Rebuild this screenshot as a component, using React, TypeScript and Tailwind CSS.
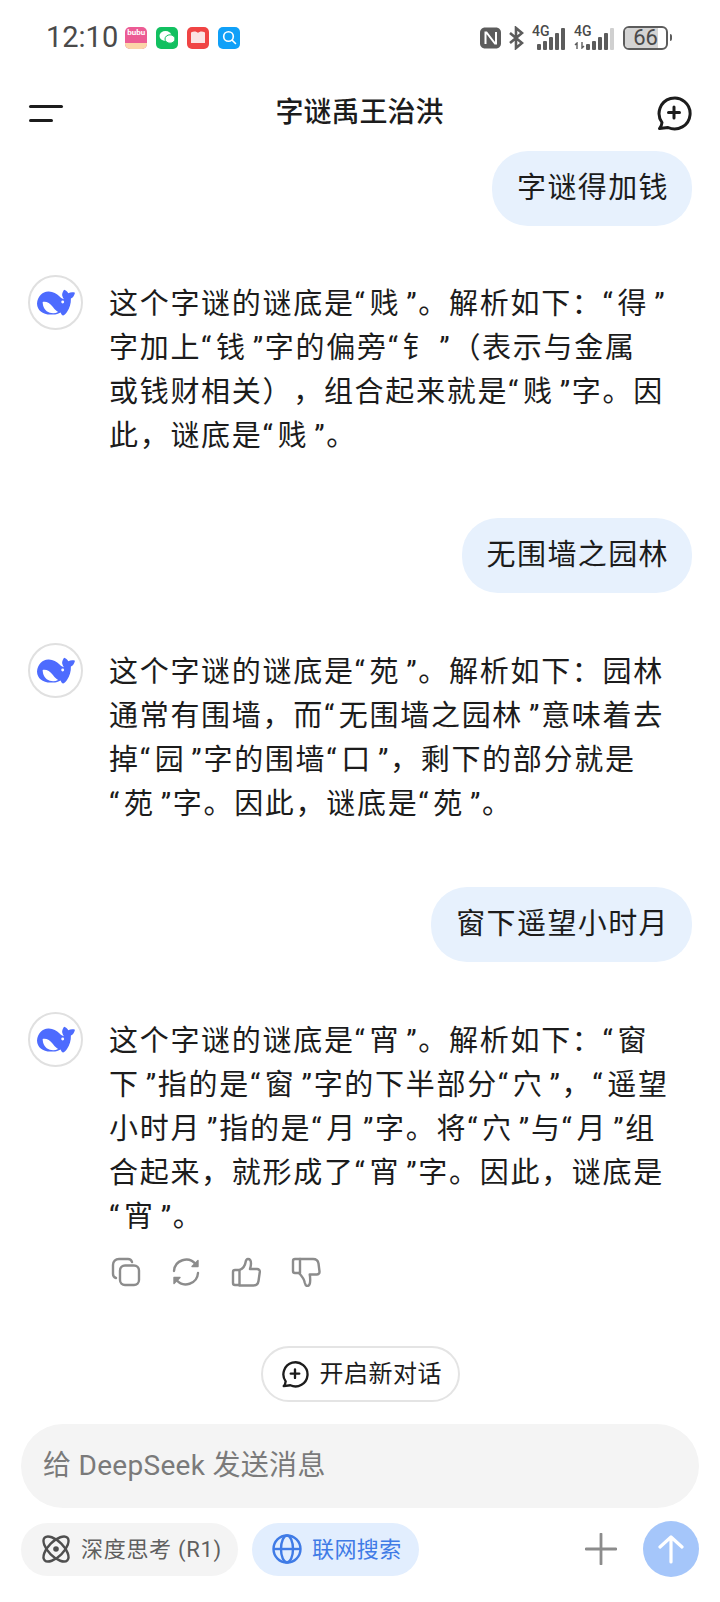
import React from 'react'

const FONT = "font-['Roboto','Noto_Sans_CJK_SC',sans-serif]"

const Whale: React.FC = () => (
  <svg width="38" height="27" viewBox="0 0 37 26">
    <path d="M0 14C.5 7 5 2.500 11 2.200c4.500-.2 8 2 11 5 1.300 1.300 2.600 2.200 4.200 2.600-1.300-2-1.900-3.500-1.700-5 .2-1.500.8-3 1.800-4.300 1.800.6 3.200 1.700 4.200 3.500 1.800-.9 3.800-1.100 6.500-.6-.7 2.800-2 4.700-4 5.800.2 5-1.300 9.500-3.800 13-1.200 1.700-2.400 2.900-3.700 3.500-1.200-.4-2.100-1.500-2.500-3-2 1.200-4.500 2-7.500 2C6 25.500.2 21 0 14z" fill="#4d6bfe" />
    <path d="M5.500 12.500c3.500-.8 7 1 10 5 1.800 2.400 3.300 3.900 5 4.800-2.500 1.300-5.200 1.500-8 .7C8 21.500 5.600 17.500 5.500 12.500z" fill="#fff" />
    <circle cx="25" cy="12.500" r="1.400" fill="#fff" />
  </svg>
)

const Avatar: React.FC = () => (
  <div className="w-[55px] h-[55px] rounded-full border-2 border-[#e0e0e0] flex items-center justify-center flex-shrink-0">
    <Whale />
  </div>
)

// quotes are set a little off the character, as in the original font
const Line: React.FC<{ text: string }> = ({ text }) => (
  <div className="whitespace-nowrap">
    {text.split(/([“”])/).map((part, i) => {
      if (part === '“') return <span key={i} className="mr-[3px]">“</span>
      if (part === '”') return <span key={i} className="ml-[6px]">”</span>
      return <React.Fragment key={i}>{part}</React.Fragment>
    })}
  </div>
)

const AiMessage: React.FC<{ lines: string[]; children?: React.ReactNode }> = ({ lines, children }) => (
  <div className="flex pl-[28px] gap-[26px]">
    <Avatar />
    <div className="pt-[7px]">
      <div className="text-[29px] leading-[44px] text-[#1c1c1c] tracking-[1.7px] [text-spacing-trim:space-all]">
        {lines.map((l) => <Line key={l} text={l} />)}
      </div>
      {children}
    </div>
  </div>
)

const UserBubble: React.FC<{ text: string }> = ({ text }) => (
  <div className="flex justify-end pr-[28px]">
    <div className="h-[75px] pl-[25px] pr-[23px] flex items-center rounded-[36px] bg-[#e7f1fd] text-[29px] tracking-[1.4px] text-[#1c1c1c]">
      {text}
    </div>
  </div>
)

const NewChatIcon: React.FC<{ size: number; sw: number; color?: string }> = ({ size, sw, color = '#1c1c1c' }) => (
  <svg width={size} height={size} viewBox="0 0 36 36" fill="none" stroke={color} strokeWidth={sw} strokeLinecap="round" strokeLinejoin="round">
    <path d="M6 27.500A15.500 15.500 0 1 1 12 32.500L3.500 33.500C5 32 5.800 30 6 27.500z" />
    <path d="M18 12v11M12.500 17.500h11" />
  </svg>
)

const ActionIcons: React.FC = () => (
  <div className="flex items-center gap-[30px] mt-[18px] ml-[2px]">
    <svg width="30" height="30" viewBox="0 0 30 30" fill="none" stroke="#8c8c8c" strokeWidth="2.400" strokeLinecap="round" strokeLinejoin="round">
      <rect x="9" y="8.500" width="19" height="19.500" rx="5" />
      <path d="M21 5c-.5-1.800-2-3-4-3H8C4.500 2 2 4.500 2 8v9c0 2 1.200 3.500 3 4" />
    </svg>
    <svg width="30" height="30" viewBox="0 0 30 30" fill="none" stroke="#8c8c8c" strokeWidth="2.400" strokeLinecap="round" strokeLinejoin="round">
      <path d="M3 14A12.200 12.200 0 0 1 24.500 7" />
      <path d="M27 16A12.200 12.200 0 0 1 5.500 23" />
      <path d="M27 3.500v6h-6z" fill="#8c8c8c" strokeWidth="1.400" />
      <path d="M3 26.500v-6h6z" fill="#8c8c8c" strokeWidth="1.400" />
    </svg>
    <svg width="30" height="30" viewBox="0 0 30 30" fill="none" stroke="#8c8c8c" strokeWidth="2.400" strokeLinecap="round" strokeLinejoin="round">
      <path d="M8.500 13v15H4c-1.200 0-2-.8-2-2V15c0-1.200.8-2 2-2z" />
      <path d="M8.500 13c3.500-1.500 5.500-4 6-7.500.3-2 1-3.500 2.500-3.500 2 0 3 2 3 4.500 0 2-.5 4-1 5.500h7c1.800 0 3 1.300 2.800 3l-1.300 9c-.5 3-2.500 4.500-5 4.500H8.500" />
    </svg>
    <svg width="30" height="30" viewBox="0 0 30 30" fill="none" stroke="#8c8c8c" strokeWidth="2.400" strokeLinecap="round" strokeLinejoin="round">
      <path d="M9 2v14H4c-1.200 0-2-.8-2-2V4c0-1.200.8-2 2-2z" />
      <path d="M9 2h13c3 0 5 1.500 5.500 4.500l1 8c.2 1.700-1 3-2.800 3h-7c.5 1.500.5 3.500.5 5.500 0 3.500-1 6-3 6-1.500 0-2-1.500-2.500-3.500-.5-3.500-2.500-6-5.700-9.500" />
    </svg>
  </div>
)

const BAR_HEIGHTS = [6, 9, 13, 17, 22]

const Signal: React.FC<{ lastColor: string }> = ({ lastColor }) => (
  <div className="flex items-end gap-[2px]">
    {BAR_HEIGHTS.map((h, i) => (
      <div key={i} className="w-[4px] rounded-[1px]" style={{ height: h, background: i === 4 ? lastColor : '#5c5c5c' }} />
    ))}
  </div>
)

const StatusBar: React.FC = () => (
  <div className="h-[75px] flex items-center pl-[46px] pr-[48px] text-[#4a4a4a]">
    <span className="text-[29px] leading-none font-['Roboto',sans-serif] mr-[7px]">12:10</span>
    <div className="flex items-center gap-[9px]">
      <div className="w-[22px] h-[22px] rounded-[5px] bg-[#ec5b94] overflow-hidden flex flex-col items-center">
        <span className="text-[8px] leading-[12px] text-white font-bold font-['Roboto',sans-serif]">bubu</span>
        <div className="mt-auto w-full h-[6px] bg-[#fbd5a8]" />
      </div>
      <div className="w-[22px] h-[22px] rounded-[5px] bg-[#12c060] flex items-center justify-center">
        <svg width="17" height="15" viewBox="0 0 17 15">
          <ellipse cx="6.500" cy="6" rx="6" ry="5" fill="#fff" />
          <ellipse cx="11" cy="9" rx="5" ry="4.200" fill="#fff" stroke="#12c060" />
        </svg>
      </div>
      <div className="w-[22px] h-[22px] rounded-[5px] bg-[#f04444] flex items-center justify-center">
        <svg width="14" height="13" viewBox="0 0 14 13">
          <path d="M0 1.500C3 0 5.500.5 7 2c1.500-1.500 4-2 7-.5V12H0z" fill="#fbe4e4" />
        </svg>
      </div>
      <div className="w-[22px] h-[22px] rounded-[5px] bg-[#10a0f8] flex items-center justify-center">
        <svg width="15" height="15" viewBox="0 0 15 15" fill="none" stroke="#fff" strokeWidth="1.600" strokeLinecap="round">
          <circle cx="6.500" cy="6.500" r="4.800" />
          <path d="M10.200 10.200L13.500 13.500" />
        </svg>
      </div>
    </div>
    <div className="ml-auto flex items-center">
      <svg width="21" height="22" viewBox="0 0 21 22" className="mr-[7px]">
        <path d="M5 0.500h11c2.800 0 5 2.200 5 5v11c0 2.800-2.200 5-5 5H5c-2.800 0-5-2.200-5-5v-11c0-2.800 2.200-5 5-5z" fill="#5c5c5c" />
        <path d="M5.500 17V5.500h1L15 16.500h1V5" fill="none" stroke="#fff" strokeWidth="2" />
      </svg>
      <svg width="16" height="24" viewBox="0 0 16 24" fill="none" stroke="#5c5c5c" strokeWidth="2.600" className="mr-[8px]">
        <path d="M2 7l12 10-6 5V2l6 5L2 17" />
      </svg>
      <div className="relative w-[33px] h-[24px] mr-[9px]">
        <span className="absolute -top-[2px] left-0 text-[14px] leading-[14px] font-medium font-['Roboto',sans-serif]">4G</span>
        <div className="absolute bottom-0 right-0"><Signal lastColor="#5c5c5c" /></div>
      </div>
      <div className="relative w-[40px] h-[24px] mr-[9px]">
        <span className="absolute -top-[2px] left-0 text-[14px] leading-[14px] font-medium font-['Roboto',sans-serif]">4G</span>
        <svg width="11" height="7" viewBox="0 0 11 7" fill="none" stroke="#5c5c5c" strokeWidth="1.400" className="absolute bottom-[1px] left-0">
          <path d="M3 7V1L1 3M8 0v6l2-2" />
        </svg>
        <div className="absolute bottom-0 right-0"><Signal lastColor="#d0d0d0" /></div>
      </div>
      <div className="w-[45px] h-[24px] rounded-[6px] border-2 border-[#5c5c5c] flex items-center overflow-hidden relative">
        <div className="absolute inset-y-0 left-0 w-[33px] bg-[#d4d4d4]" />
        <span className="relative w-full text-center text-[22px] leading-none font-['Roboto',sans-serif]">66</span>
      </div>
      <div className="w-[2px] h-[7px] bg-[#5c5c5c] ml-[2px] rounded-r" />
    </div>
  </div>
)

const Header: React.FC = () => (
  <div className="h-[76px] flex items-center justify-between pl-[29px] pr-[28px]">
    <div className="flex flex-col gap-[11px] w-[34px]">
      <div className="h-[3px] w-[34px] bg-[#1c1c1c] rounded-full" />
      <div className="h-[3px] w-[24px] bg-[#1c1c1c] rounded-full" />
    </div>
    <div className="text-[28px] font-medium text-[#1c1c1c]">字谜禹王治洪</div>
    <NewChatIcon size={36} sw={3} />
  </div>
)

const App: React.FC = () => (
  <div className={`w-[720px] h-[1602px] bg-white flex flex-col ${FONT}`}>
    <StatusBar />
    <Header />
    <div className="flex flex-col">
      <UserBubble text="字谜得加钱" />
      <div className="mt-[49px]">
        <AiMessage lines={['这个字谜的谜底是“贱”。解析如下：“得”', '字加上“钱”字的偏旁“钅”（表示与金属', '或钱财相关），组合起来就是“贱”字。因', '此，谜底是“贱”。']} />
      </div>
      <div className="mt-[60px]"><UserBubble text="无围墙之园林" /></div>
      <div className="mt-[50px]">
        <AiMessage lines={['这个字谜的谜底是“苑”。解析如下：园林', '通常有围墙，而“无围墙之园林”意味着去', '掉“园”字的围墙“口”，剩下的部分就是', '“苑”字。因此，谜底是“苑”。']} />
      </div>
      <div className="mt-[61px]"><UserBubble text="窗下遥望小时月" /></div>
      <div className="mt-[50px]">
        <AiMessage lines={['这个字谜的谜底是“宵”。解析如下：“窗', '下”指的是“窗”字的下半部分“穴”，“遥望', '小时月”指的是“月”字。将“穴”与“月”组', '合起来，就形成了“宵”字。因此，谜底是', '“宵”。']}>
          <ActionIcons />
        </AiMessage>
      </div>
    </div>

    <div className="mt-auto flex flex-col items-center">
      <div className="h-[56px] w-[199px] rounded-full border-2 border-[#e4e4e4] flex items-center pl-[18px] gap-[11px]">
        <NewChatIcon size={28} sw={3} />
        <span className="text-[24px] tracking-[0.5px] text-[#1c1c1c]">开启新对话</span>
      </div>
    </div>
    <div className="mx-[21px] mt-[22px] h-[84px] rounded-[42px] bg-[#f4f4f4] flex items-center px-[22px] text-[28px] tracking-[0.3px] text-[#7a7a7a]">
      给 DeepSeek 发送消息
    </div>
    <div className="flex items-center pl-[21px] pr-[21px] mt-[13px] mb-[25px]">
      <div className="h-[53px] w-[217px] rounded-full bg-[#f4f4f4] flex items-center pl-[20px] gap-[10px] text-[22px] tracking-[0.7px] text-[#5f5f5f]">
        <svg width="30" height="30" viewBox="0 0 30 30" fill="none" stroke="#4f4f4f" strokeWidth="2.400">
          <ellipse cx="15" cy="15" rx="16" ry="7.500" transform="rotate(45 15 15)" />
          <ellipse cx="15" cy="15" rx="16" ry="7.500" transform="rotate(-45 15 15)" />
          <circle cx="15" cy="15" r="2.800" fill="#4f4f4f" stroke="none" />
        </svg>
        <span>深度思考 (R1)</span>
      </div>
      <div className="ml-[14px] h-[53px] w-[167px] rounded-full bg-[#e2eefe] flex items-center pl-[20px] gap-[10px] text-[22px] tracking-[0.4px] text-[#3f7be6]">
        <svg width="30" height="30" viewBox="0 0 30 30" fill="none" stroke="#3f7be6" strokeWidth="2.400">
          <circle cx="15" cy="15" r="13.500" />
          <ellipse cx="15" cy="15" rx="6" ry="13.500" />
          <path d="M1.500 15h27" />
        </svg>
        <span>联网搜索</span>
      </div>
      <svg width="32" height="32" viewBox="0 0 32 32" fill="none" stroke="#8c8c8c" strokeWidth="2.800" strokeLinecap="round" className="ml-auto mr-[26px]">
        <path d="M16 1v30M1 16h30" />
      </svg>
      <div className="w-[56px] h-[56px] rounded-full bg-[#a5c6fa] flex items-center justify-center">
        <svg width="26" height="30" viewBox="0 0 26 30" fill="none" stroke="#fff" strokeWidth="3.200" strokeLinecap="round" strokeLinejoin="round">
          <path d="M13 28V3M2 13L13 3l11 10" />
        </svg>
      </div>
    </div>
  </div>
)

export default App
